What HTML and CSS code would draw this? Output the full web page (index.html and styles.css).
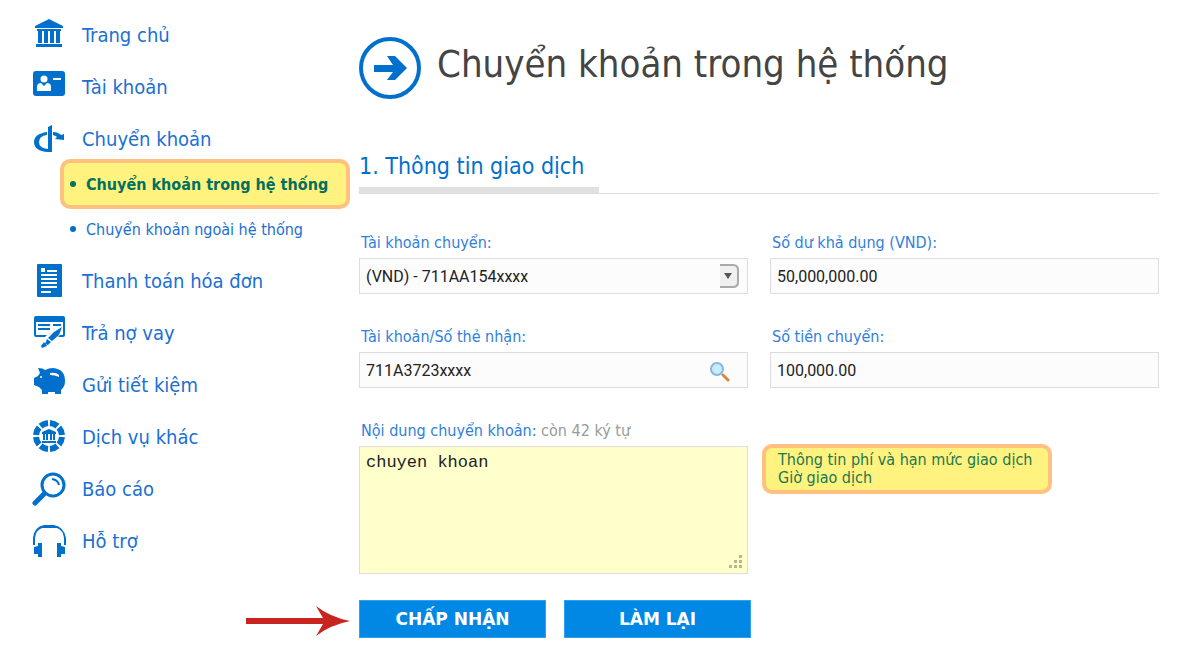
FILE: index.html
```html
<!DOCTYPE html>
<html lang="vi">
<head>
    <meta charset="UTF-8">
    <meta name="viewport" content="width=device-width, initial-scale=1.0">
    <title>Chuyển khoản trong hệ thống</title>
    <link rel="stylesheet" href="styles.css">
</head>
<body>

<div class="page">
    <nav class="sidebar">
        <ul class="menu">
            <li>
                <a class="menu-link" href="#">
                    <svg class="menu-icon" viewBox="0 0 34 34">
                        <path d="M17 1 31 8v2H3V8zM5 11h24v2H5zM6 13h4v12H6zM12 13h4v12h-4zM18 13h4v12h-4zM24 13h4v12h-4zM4 26h26v3H4z"/>
                    </svg>
                    Trang chủ
                </a>
            </li>
            <li>
                <a class="menu-link" href="#">
                    <svg class="menu-icon" viewBox="0 0 34 34">
                        <rect x="1" y="1" width="32" height="25" rx="3"/>
                        <circle class="cut" cx="12" cy="9" r="3.5"/>
                        <path class="cut" d="M5 21v-4q0-4 4-4l3 3 3-3q4 0 4 4v4zM21 8h8v2h-8z"/>
                    </svg>
                    Tài khoản
                </a>
            </li>
            <li>
                <a class="menu-link" href="#">
                    <svg class="menu-icon" viewBox="0 0 34 34">
                        <path d="M16 5l4-2v27h-4z"/>
                        <path d="M15 10v3q-8 1-8 7 0 6 9 7h4v3h-4Q2 29 2 20q0-8 13-10zM21 10q5 0 8 3l3-1v6l-9-1 2-2q-1-1-4-2z"/>
                    </svg>
                    Chuyển khoản
                </a>
                <ul class="submenu">
                    <li class="active"><a href="#">Chuyển khoản trong hệ thống</a></li>
                    <li><a href="#">Chuyển khoản ngoài hệ thống</a></li>
                </ul>
            </li>
            <li>
                <a class="menu-link" href="#">
                    <svg class="menu-icon" viewBox="0 0 34 34">
                        <rect x="5" y="0" width="25" height="33" rx="1"/>
                        <path class="cut" d="M9 4h4v4H9zM15 6h10v2H15zM9 10h16v2H9zM9 14h16v2H9zM9 18h16v2H9zM9 22h16v2H9zM9 27h10v2H9z"/>
                    </svg>
                    Thanh toán hóa đơn
                </a>
            </li>
            <li>
                <a class="menu-link" href="#">
                    <svg class="menu-icon" viewBox="0 0 34 34">
                        <path d="M4 0h27q2 0 2 2v17q0 2-2 2h-5l2-2h3V6H4v13h11l-2 2H4q-2 0-2-2V2q0-2 2-2z"/>
                        <path d="M6 8h12v2H6zM21 8h8v2h-8zM6 12h12v2H6zM30 11l-3 8-7 6-4-3 6-6zM15 23l4 3-3 3-3-1zM12 26l3 4-5 2-1-2z"/>
                    </svg>
                    Trả nợ vay
                </a>
            </li>
            <li>
                <a class="menu-link" href="#">
                    <svg class="menu-icon" viewBox="0 0 34 34">
                        <path d="M6 0q5 0 7 2 4-2 8-2 12 1 12 13 0 6-4 9v4h-6v-2h-7v2h-6v-4l-3-3-5-2v-7l4-2 2-3z"/>
                        <circle class="cut" cx="9" cy="9" r="1"/>
                        <path class="cut" d="M18 5q6-1 9 2v2q-4-2-9-2z"/>
                    </svg>
                    Gửi tiết kiệm
                </a>
            </li>
            <li>
                <a class="menu-link" href="#">
                    <svg class="menu-icon" viewBox="0 0 34 34">
                        <circle class="ring" cx="17" cy="16" r="13" pathLength="80"/>
                        <path d="M17 9l7 3v2H10v-2zM11 14h2v6h-2zM14 14h2v6h-2zM18 14h2v6h-2zM21 14h2v6h-2zM10 21h14v2H10z"/>
                    </svg>
                    Dịch vụ khác
                </a>
            </li>
            <li>
                <a class="menu-link" href="#">
                    <svg class="menu-icon" viewBox="0 0 34 34">
                        <circle class="line" cx="21" cy="13" r="11"/>
                        <path class="line" d="M20 7q6 1 7 6"/>
                        <path class="handle" d="M12 22l-9 9"/>
                    </svg>
                    Báo cáo
                </a>
            </li>
            <li>
                <a class="menu-link" href="#">
                    <svg class="menu-icon" viewBox="0 0 34 34">
                        <path d="M1 21v-7Q2 3 12 1h10q10 2 12 13v7h-2v-7Q31 6 25 4H10Q4 6 3 14v7z"/>
                        <path d="M10 19v14H6v-3H2v-7l4-1v-3zM25 19v14h4v-3h4v-7l-4-1v-3z"/>
                    </svg>
                    Hỗ trợ
                </a>
            </li>
        </ul>
    </nav>

    <main class="content">
        <header class="page-header">
            <svg class="header-icon" viewBox="0 0 62 62">
                <circle cx="31" cy="31" r="29"/>
                <path d="M15 28h19l-6-9h8l12 12-12 12h-8l6-8H15z"/>
            </svg>
            <h1>Chuyển khoản trong hệ thống</h1>
        </header>

        <div class="section-bar">
            <h2>1. Thông tin giao dịch</h2>
        </div>

        <form class="transfer-form">
            <div class="field">
                <label for="fromAccount">Tài khoản chuyển:</label>
                <div class="control">
                    <select id="fromAccount">
                        <option>(VND) - 711AA154xxxx</option>
                    </select>
                    <svg class="select-arrow" viewBox="0 0 20 24">
                        <path class="face" d="M1 1h13q5 0 5 5v12q0 5-5 5H1"/>
                        <path class="tip" d="M5 9h8l-4 6z"/>
                    </svg>
                </div>
            </div>
            <div class="field">
                <label for="balance">Số dư khả dụng (VND):</label>
                <input type="text" id="balance" value="50,000,000.00" readonly>
            </div>
            <div class="field">
                <label for="toAccount">Tài khoản/Số thẻ nhận:</label>
                <div class="control">
                    <input type="text" id="toAccount" value="711A3723xxxx">
                    <button type="button" class="search-button" aria-label="Tìm kiếm">
                        <svg viewBox="0 0 20 20">
                            <path class="grip" d="M13 13l5 5"/>
                            <circle cx="7" cy="7" r="6"/>
                        </svg>
                    </button>
                </div>
            </div>
            <div class="field">
                <label for="amount">Số tiền chuyển:</label>
                <input type="text" id="amount" value="100,000.00">
            </div>
            <div class="field">
                <label for="message">Nội dung chuyển khoản: <span class="counter">còn 42 ký tự</span></label>
                <div class="control">
                    <textarea id="message">chuyen khoan</textarea>
                    <svg class="resize-grip" viewBox="0 0 14 14">
                        <path d="M11 0h3v3h-3zM11 5h3v3h-3zM6 5h3v3H6zM11 10h3v3h-3zM6 10h3v3H6zM1 10h3v3H1z"/>
                    </svg>
                </div>
            </div>
            <div class="notes">
                <a href="#">Thông tin phí và hạn mức giao dịch</a>
                <a href="#">Giờ giao dịch</a>
            </div>

            <div class="actions">
                <svg class="pointer" viewBox="0 0 104 30">
                    <path d="M0 12h77L70 0q14 11 34 15-20 4-34 15l7-12H0z"/>
                </svg>
                <button type="submit">CHẤP NHẬN</button>
                <button type="reset">LÀM LẠI</button>
            </div>
        </form>
    </main>
</div>

</body>
</html>
```
FILE: styles.css
```css
* {
    box-sizing: border-box;
}

body {
    margin: 0;
    font-family: Tahoma, "DejaVu Sans Condensed", "Noto Sans", sans-serif;
    font-size: 16px;
    color: #444;
    background-color: #fff;
}

a {
    color: inherit;
    text-decoration: none;
}

ul {
    list-style: none;
    margin: 0;
    padding: 0;
}

h1, h2 {
    margin: 0;
    font-weight: normal;
}

.page {
    display: grid;
    grid-template-columns: 327px 1fr;
    padding: 15px 24px 24px 32px;
}

/* Sidebar */
.menu {
    display: flex;
    flex-direction: column;
    gap: 12px;
}

.menu-link {
    display: flex;
    align-items: center;
    gap: 16px;
    height: 40px;
    font-size: 20px;
    color: #1a70d2;
}

.menu-icon {
    width: 34px;
    height: 34px;
    fill: #0070cc;
}

.menu-icon .cut {
    fill: #fff;
}

.menu-icon .line,
.menu-icon .handle,
.menu-icon .ring {
    fill: none;
    stroke: #0070cc;
    stroke-width: 3;
}

.menu-icon .line + .line {
    stroke-width: 2;
}

.menu-icon .handle {
    stroke-width: 5;
    stroke-linecap: round;
}

.menu-icon .ring {
    stroke-width: 6;
    stroke-dasharray: 8 2;
    stroke-dashoffset: -1;
}

.submenu {
    margin: 0 9px 0 28px;
}

.submenu li {
    display: flex;
    align-items: center;
    gap: 10px;
    height: 40px;
    padding-left: 10px;
    color: #1a70d2;
    white-space: nowrap;
}

.submenu li::before {
    content: "";
    width: 6px;
    height: 6px;
    border-radius: 50%;
    background-color: #0070cc;
}

.submenu .active {
    height: 50px;
    padding-left: 6px;
    border: 4px solid #ffc080;
    border-radius: 10px;
    background-color: #fff27f;
    color: #007060;
    font-weight: bold;
}

.submenu .active::before {
    background-color: #007060;
}

/* Main content */
.page-header {
    display: flex;
    align-items: center;
    gap: 16px;
    padding-top: 18px;
}

.header-icon {
    width: 62px;
    height: 62px;
    fill: #0070cc;
}

.header-icon circle {
    fill: none;
    stroke: #0070cc;
    stroke-width: 4;
}

h1 {
    font-size: 38px;
    line-height: 62px;
    padding-bottom: 8px;
}

.section-bar {
    margin-top: 48px;
    border-bottom: 1px solid #ddd;
}

h2 {
    width: 240px;
    padding-bottom: 6px;
    font-size: 23px;
    line-height: 30px;
    color: #0070cc;
    border-bottom: 6px solid #e0e0e0;
    white-space: nowrap;
}

.transfer-form {
    display: grid;
    grid-template-columns: 1fr 1fr;
    gap: 34px 22px;
    margin-top: 40px;
}

.field {
    display: flex;
    flex-direction: column;
    align-self: start;
    gap: 6px;
}

label {
    padding-left: 2px;
    line-height: 18px;
    color: #3080dc;
}

.counter {
    color: #999;
}

.control {
    position: relative;
    display: flex;
}

input, select, textarea {
    width: 100%;
    height: 36px;
    padding: 0 6px;
    border: 1px solid #ddd;
    border-radius: 0;
    background-color: #fcfcfc;
    color: #222;
    font-family: Roboto, Arial, sans-serif;
    font-size: 16px;
    appearance: none;
}

textarea {
    height: 128px;
    padding: 6px;
    background-color: #ffffcc;
    font-family: "Liberation Mono", "Courier New", monospace;
    font-size: 17px;
    resize: none;
}

.select-arrow {
    position: absolute;
    top: 6px;
    right: 9px;
    width: 20px;
    height: 24px;
    pointer-events: none;
}

.select-arrow .face {
    fill: #f0f0f0;
    stroke: #aaa;
    stroke-width: 2;
}

.select-arrow .tip {
    fill: #555;
}

.search-button {
    position: absolute;
    top: 10px;
    right: 18px;
    width: 20px;
    height: 20px;
    padding: 0;
    border: 0;
    background: none;
    cursor: pointer;
}

.search-button svg {
    display: block;
}

.search-button circle {
    fill: #c8ecff;
    stroke: #8ab4e0;
    stroke-width: 2;
}

.search-button .grip {
    stroke: #d88840;
    stroke-width: 3;
    stroke-linecap: round;
}

.resize-grip {
    position: absolute;
    right: 6px;
    bottom: 5px;
    width: 14px;
    height: 14px;
    fill: #b8b890;
    pointer-events: none;
}

.notes {
    justify-self: start;
    align-self: start;
    width: 290px;
    margin: 22px 0 0 -8px;
    padding: 3px 12px;
    border: 4px solid #ffc080;
    border-radius: 10px;
    background-color: #fff27f;
    color: #207850;
}

.notes a {
    display: block;
    line-height: 18px;
    white-space: nowrap;
}

.actions {
    grid-column: 1 / -1;
    position: relative;
    display: flex;
    gap: 18px;
    margin-top: -8px;
}

.actions button {
    width: 187px;
    height: 38px;
    padding: 0;
    border: 1px solid #30a0f0;
    background-color: #0088e4;
    color: #fff;
    font-family: Verdana, "DejaVu Sans", sans-serif;
    font-size: 17px;
    font-weight: bold;
    cursor: pointer;
}

.pointer {
    position: absolute;
    top: 6px;
    right: 100%;
    width: 104px;
    height: 30px;
    margin-right: 9px;
    fill: #c82420;
}
```
